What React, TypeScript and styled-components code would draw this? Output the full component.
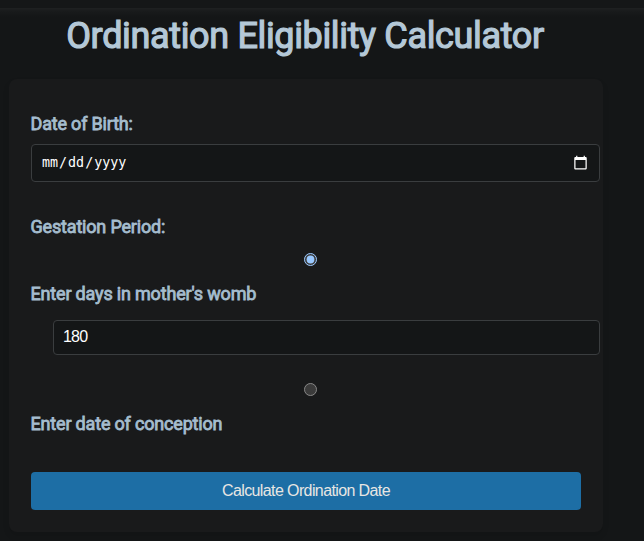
import React, { useState } from "react";
import styled, { createGlobalStyle } from "styled-components";

const GlobalStyle = createGlobalStyle`
  * { box-sizing: border-box; }
  html { color-scheme: dark; }
  body { margin: 0; background: #141617; overflow: hidden; font-family: Roboto, sans-serif; }
`;

const Page = styled.div`
  height: 541px;
  overflow: hidden;
  background: #141617;
`;

const TopBar = styled.header`
  height: 8px;
  background: #151718;
`;

const Main = styled.main`
  height: 533px;
  padding: 0 41px 0 9px;
  background: linear-gradient(#1f2122, #191b1c 3px, #141617 9px);
`;

const Title = styled.h1`
  margin: 0;
  height: 71px;
  padding: 7px 2px 0 0;
  color: #b4c8d7;
  font-size: 36px;
  font-weight: 400;
  letter-spacing: -0.35px;
  -webkit-text-stroke: 1.2px #b4c8d7;
  line-height: 42px;
  text-align: center;
  white-space: nowrap;
`;

const Card = styled.form`
  display: flex;
  flex-direction: column;
  height: 453px;
  padding: 33px 22px 0;
  border-radius: 8px;
  background: #191a1b;
  box-shadow: 0 4px 6px rgba(0, 0, 0, 0.1);
`;

const Label = styled.label<{ $gap: number }>`
  height: 22px;
  margin-bottom: ${(p) => p.$gap}px;
  color: #a5bdce;
  font-size: 18px;
  font-weight: 400;
  letter-spacing: -0.18px;
  -webkit-text-stroke: 0.8px #a5bdce;
  line-height: 24px;
  white-space: nowrap;
  margin-left: -0.5px;
`;

const Field = styled.input<{ $indent?: number; $height: number }>`
  flex: none;
  margin: 0 -19px 0 ${(p) => p.$indent ?? 0}px;
  height: ${(p) => p.$height}px;
  padding: 0 9px 1px;
  border: 1px solid #3a3d3f;
  border-radius: 4px;
  outline: none;
  background: #141617;
  color: #fff;
  font-family: "Liberation Sans", Arial, sans-serif;
  font-size: 16px;
  letter-spacing: -0.8px;
`;

const DateField = styled(Field)`
  padding-right: 11px;
  font-family: "DejaVu Sans Mono", monospace;
  font-size: 13.333px;
  letter-spacing: 0;

  &::-webkit-calendar-picker-indicator {
    width: 15px;
    height: 15px;
    padding: 0;
    background-size: 15px 15px;
  }
`;

const Radio = styled.input`
  flex: none;
  align-self: center;
  width: 13px;
  height: 13px;
  margin: 0 0 0 9px;
`;

const Group = styled.div<{ $top: number }>`
  display: flex;
  flex-direction: column;
  margin-top: ${(p) => p.$top}px;
`;

const Submit = styled.button`
  height: 38px;
  margin-top: 38px;
  padding: 0;
  border: 0;
  border-radius: 4px;
  background: #1d6ea5;
  color: #e8e6e3;
  font-family: "Liberation Sans", Arial, sans-serif;
  font-size: 16px;
  letter-spacing: -0.61px;
`;

export default function App() {
  const [mode, setMode] = useState("days");
  const [days, setDays] = useState("180");
  return (
    <Page>
      <GlobalStyle />
      <TopBar />
      <Main>
        <Title>Ordination Eligibility Calculator</Title>
        <Card onSubmit={(e) => e.preventDefault()}>
          <Label htmlFor="birth" $gap={10}>Date of Birth:</Label>
          <DateField id="birth" type="date" $height={38} />
          <Group $top={33}>
            <Label as="span" $gap={16}>Gestation Period:</Label>
            <Radio id="days" type="radio" name="mode" checked={mode === "days"} onChange={() => setMode("days")} />
          </Group>
          <Group $top={16}>
            <Label htmlFor="days" $gap={16}>Enter days in mother's womb</Label>
            <Field $indent={22} $height={35} value={days} onChange={(e) => setDays(e.target.value)} />
          </Group>
          <Group $top={28}>
            <Radio id="conception" type="radio" name="mode" checked={mode === "conception"} onChange={() => setMode("conception")} />
          </Group>
          <Group $top={16}>
            <Label htmlFor="conception" $gap={0}>Enter date of conception</Label>
          </Group>
          <Submit type="submit">Calculate Ordination Date</Submit>
        </Card>
      </Main>
    </Page>
  );
}
